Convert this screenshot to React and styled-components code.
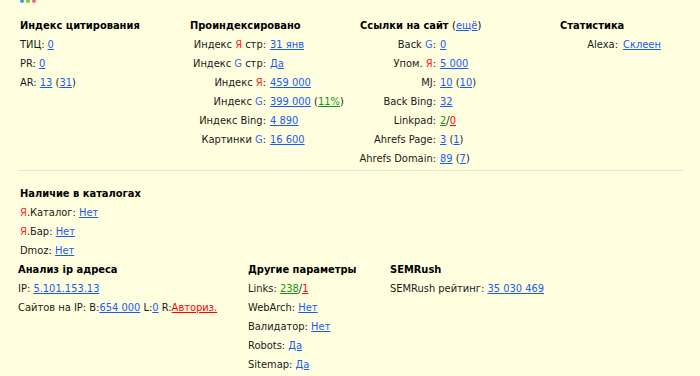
import styled, { createGlobalStyle } from 'styled-components'

const GlobalStyle = createGlobalStyle`
  html, body {
    margin: 0;
    padding: 0;
    background: #ffffe0;
  }
  body {
    font-family: 'DejaVu Sans Condensed', Tahoma, 'DejaVu Sans', sans-serif;
    font-size: 11px;
    color: #1a1a1a;
  }
`

const Page = styled.div`
  width: 700px;
  height: 376px;
  overflow: hidden;
  background: #ffffe0;
`

const Dots = styled.div`
  display: flex;
  gap: 2px;
  padding-left: 20px;
  height: 3px;
`

const Dot = styled.span`
  width: 4px;
  height: 3px;
  border-radius: 0 0 2px 2px;
  background: ${(p) => p.color};
`

const Section = styled.div`
  display: flex;
  padding: ${(p) => p.pad || '0'};
  line-height: 19px;
`

const Column = styled.div`
  width: ${(p) => p.w}px;
  flex: none;
`

const Heading = styled.div`
  font-weight: bold;
  color: #000;
`

const Grid = styled.div`
  display: grid;
  grid-template-columns: ${(p) => p.label}px auto;
  column-gap: ${(p) => p.gap || 4}px;
  white-space: nowrap;
`

const Label = styled.span`
  justify-self: end;
`

const Line = styled.div`
  white-space: nowrap;
`

const Link = styled.a`
  color: ${(p) => (p.tone === 'green' ? '#149414' : p.tone === 'red' ? '#f00' : '#1a5af5')};
  text-decoration: underline;
  cursor: pointer;
`

const Ya = styled.span`
  color: #f22;
`

const G = styled.span`
  color: #3d6cf0;
`

const Plain = styled.span`
  font-weight: normal;
`

const Divider = styled.hr`
  margin: 2px 16px 0 18px;
  border: 0;
  border-top: 1px solid #e6e6c6;
  height: 0;
`

function Row({ label, children }) {
  return (
    <>
      <Label>{label}</Label>
      <span>{children}</span>
    </>
  )
}

export default function App() {
  return (
    <Page>
      <GlobalStyle />
      <Dots>
        <Dot color="#30a8dc" />
        <Dot color="#8cc63f" />
        <Dot color="#f06a9a" />
      </Dots>

      <Section pad="13px 0 0 20px">
        <Column w={170}>
          <Heading>Индекс цитирования</Heading>
          <Line>
            ТИЦ: <Link>0</Link>
          </Line>
          <Line>
            PR: <Link>0</Link>
          </Line>
          <Line>
            AR: <Link>13</Link> (<Link>31</Link>)
          </Line>
        </Column>

        <Column w={170}>
          <Heading>Проиндексировано</Heading>
          <Grid label={76}>
            <Row label={<>Индекс <Ya>Я</Ya> стр:</>}>
              <Link>31 янв</Link>
            </Row>
            <Row label={<>Индекс <G>G</G> стр:</>}>
              <Link>Да</Link>
            </Row>
            <Row label={<>Индекс <Ya>Я</Ya>:</>}>
              <Link>459 000</Link>
            </Row>
            <Row label={<>Индекс <G>G</G>:</>}>
              <Link>399 000</Link> (<Link tone="green">11%</Link>)
            </Row>
            <Row label="Индекс Bing:">
              <Link>4 890</Link>
            </Row>
            <Row label={<>Картинки <G>G</G>:</>}>
              <Link>16 600</Link>
            </Row>
          </Grid>
        </Column>

        <Column w={200}>
          <Heading>
            Ссылки на сайт <Plain>(<Link>ещё</Link>)</Plain>
          </Heading>
          <Grid label={76}>
            <Row label={<>Back <G>G</G>:</>}>
              <Link>0</Link>
            </Row>
            <Row label={<>Упом. <Ya>Я</Ya>:</>}>
              <Link>5 000</Link>
            </Row>
            <Row label="MJ:">
              <Link>10</Link> (<Link>10</Link>)
            </Row>
            <Row label="Back Bing:">
              <Link>32</Link>
            </Row>
            <Row label="Linkpad:">
              <Link tone="green">2</Link>/<Link tone="red">0</Link>
            </Row>
            <Row label="Ahrefs Page:">
              <Link>3</Link> (<Link>1</Link>)
            </Row>
            <Row label="Ahrefs Domain:">
              <Link>89</Link> (<Link>7</Link>)
            </Row>
          </Grid>
        </Column>

        <Column w={120}>
          <Heading>Статистика</Heading>
          <Grid label={58} gap={5}>
            <Row label="Alexa:">
              <Link>Склеен</Link>
            </Row>
          </Grid>
        </Column>
      </Section>

      <Divider />

      <Section pad="13px 0 0 20px">
        <Column w={300}>
          <Heading>Наличие в каталогах</Heading>
          <Line>
            <Ya>Я</Ya>.Каталог: <Link>Нет</Link>
          </Line>
          <Line>
            <Ya>Я</Ya>.Бар: <Link>Нет</Link>
          </Line>
          <Line>
            Dmoz: <Link>Нет</Link>
          </Line>
        </Column>
      </Section>

      <Section pad="0 0 0 18px">
        <Column w={230}>
          <Heading>Анализ ip адреса</Heading>
          <Line>
            IP: <Link>5.101.153.13</Link>
          </Line>
          <Line>
            Сайтов на IP: B:<Link>654 000</Link> L:<Link>0</Link> R:<Link tone="red">Авториз.</Link>
          </Line>
        </Column>

        <Column w={142}>
          <Heading>Другие параметры</Heading>
          <Line>
            Links: <Link tone="green">238</Link>/<Link tone="red">1</Link>
          </Line>
          <Line>
            WebArch: <Link>Нет</Link>
          </Line>
          <Line>
            Валидатор: <Link>Нет</Link>
          </Line>
          <Line>
            Robots: <Link>Да</Link>
          </Line>
          <Line>
            Sitemap: <Link>Да</Link>
          </Line>
        </Column>

        <Column w={250}>
          <Heading>SEMRush</Heading>
          <Line>
            SEMRush рейтинг: <Link>35 030 469</Link>
          </Line>
        </Column>
      </Section>
    </Page>
  )
}
